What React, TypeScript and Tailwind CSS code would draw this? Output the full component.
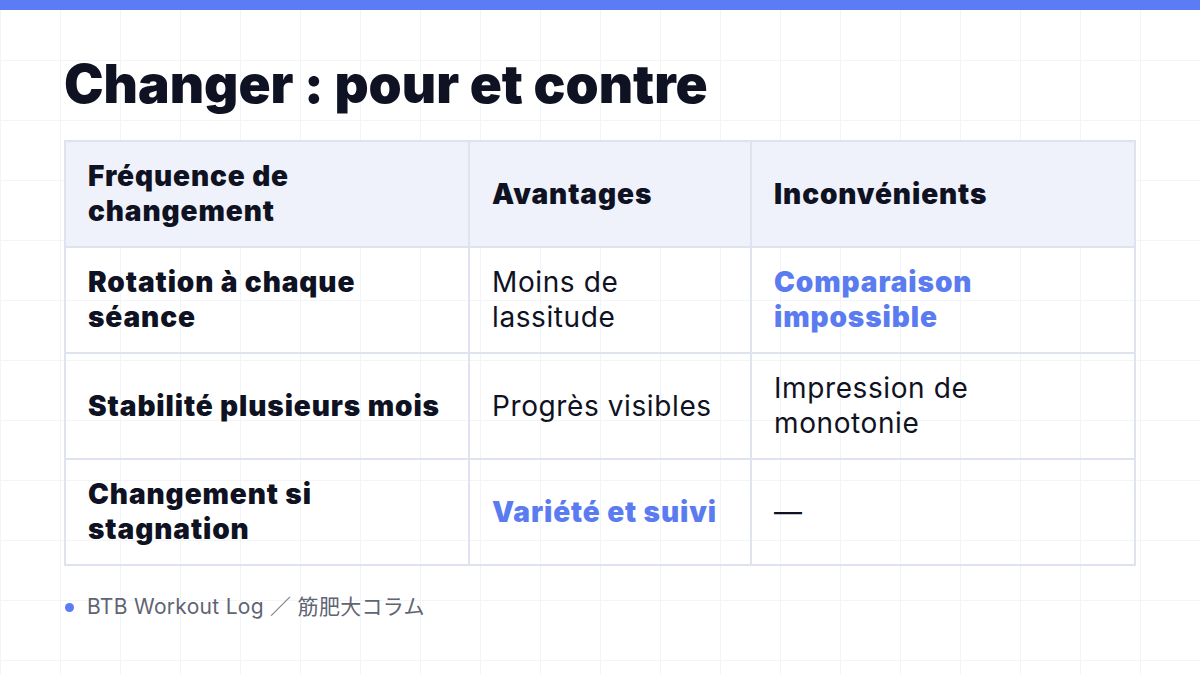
import React from "react";

const rows = [
  {
    a: "Rotation à chaque séance",
    b: { t: "Moins de lassitude", hi: false },
    c: { t: "Comparaison impossible", hi: true },
  },
  {
    a: "Stabilité plusieurs mois",
    b: { t: "Progrès visibles", hi: false },
    c: { t: "Impression de monotonie", hi: false },
  },
  {
    a: "Changement si stagnation",
    b: { t: "Variété et suivi", hi: true },
    c: { t: "—", hi: false },
  },
];

export default function App() {
  return (
    <div
      className="relative w-[1200px] h-[675px] overflow-hidden bg-white bg-[linear-gradient(to_right,#f3f4f8_1px,transparent_1px),linear-gradient(to_bottom,#f3f4f8_1px,transparent_1px)] bg-[size:60px_60px] text-[#0f1222]"
      style={{ fontFamily: "Inter, 'Noto Sans CJK JP', sans-serif" }}
    >
      <div className="h-[10px] bg-[#5b7cf5]" />
      <div className="px-[64px] pt-[43px]">
        <h1 className="text-[53px] leading-[62px] font-black">
          Changer : pour et contre
        </h1>
        <table className="mt-[25px] w-[1070px] border-collapse border-2 border-[#dfe3f0] table-fixed">
          <colgroup>
            <col className="w-[404px]" />
            <col className="w-[282px]" />
            <col className="w-[384px]" />
          </colgroup>
          <thead>
            <tr className="bg-[#f0f2fb]">
              {["Fréquence de changement", "Avantages", "Inconvénients"].map((h) => (
                <th
                  key={h}
                  className="border-2 border-[#dfe3f0] px-[22px] py-[17px] text-left align-middle text-[28px] leading-[35px] font-black tracking-[0.9px]"
                >
                  {h}
                </th>
              ))}
            </tr>
          </thead>
          <tbody>
            {rows.map((r) => (
              <tr key={r.a}>
                <td className="border-2 border-[#dfe3f0] px-[22px] py-[17px] align-middle text-[28px] leading-[35px] font-black tracking-[0.9px]">
                  {r.a}
                </td>
                {[r.b, r.c].map((c, i) => (
                  <td
                    key={i}
                    className={
                      c.hi
                        ? "border-2 border-[#dfe3f0] px-[22px] py-[17px] align-middle text-[28px] leading-[35px] font-black tracking-[0.9px] text-[#5b7cf0]"
                        : "border-2 border-[#dfe3f0] px-[22px] py-[17px] align-middle text-[28px] leading-[35px] font-normal tracking-[0.6px]"
                    }
                  >
                    {c.t}
                  </td>
                ))}
              </tr>
            ))}
          </tbody>
        </table>
        <div className="mt-[27px] flex items-center gap-[13px] text-[21px] leading-[28px] tracking-[0.3px] text-[#5f6473]">
          <span className="ml-[1px] w-[9px] h-[9px] rounded-full bg-[#5b7cf5]" />
          <span>BTB Workout Log ／ 筋肥大コラム</span>
        </div>
      </div>
    </div>
  );
}
